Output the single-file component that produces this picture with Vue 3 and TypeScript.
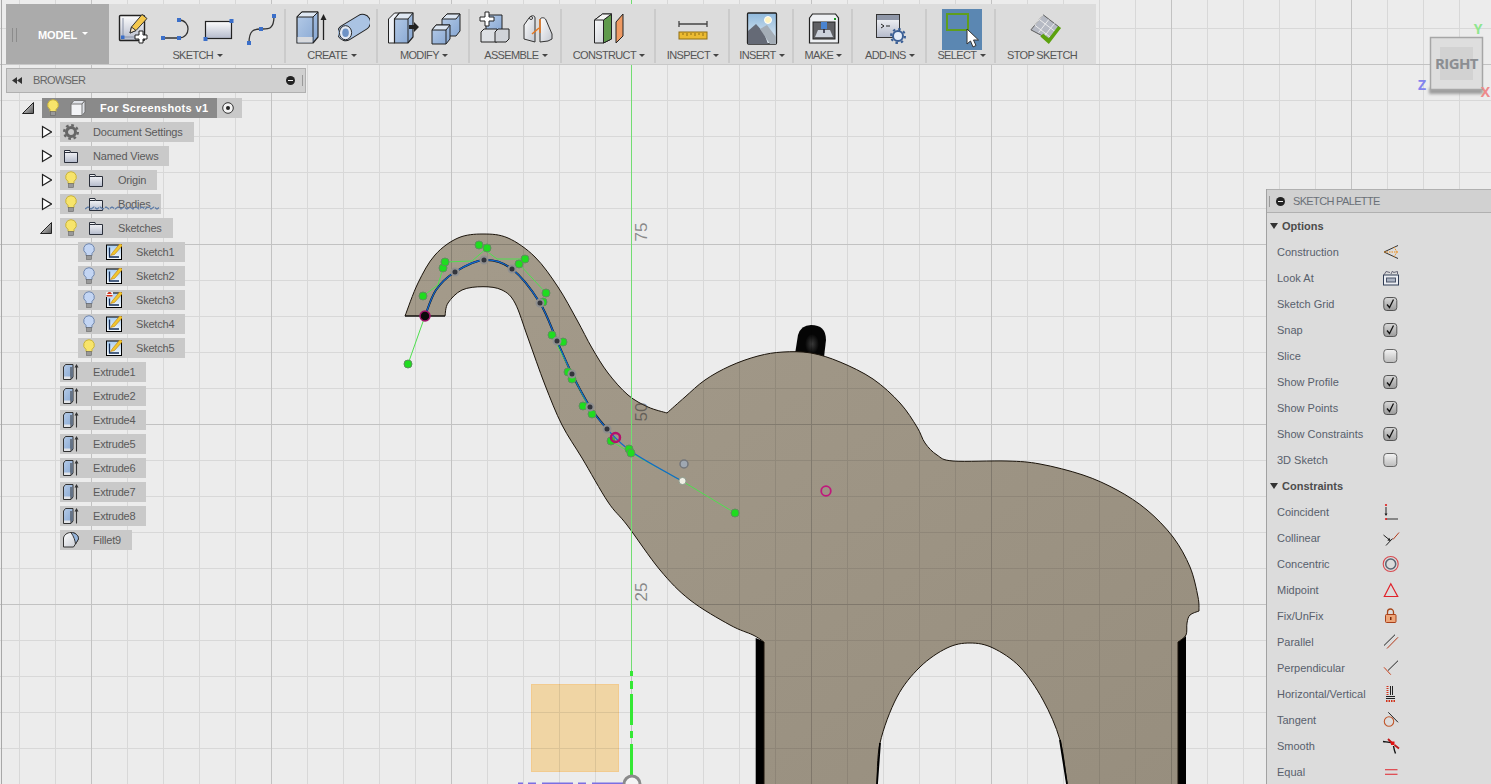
<script setup lang="ts">
type Pt = [number, number]

interface ToolGroup {
  label: string
  icons: string[]
  arrow: boolean
}

interface TreeRow {
  label: string
  depth: number
  expander?: 'closed' | 'open'
  bulb?: 'on' | 'off'
  icon: string
  broken?: boolean
}

const groups: ToolGroup[] = [
  { label: 'SKETCH', icons: ['i-newsketch', 'i-arc', 'i-rect', 'i-spline'], arrow: true },
  { label: 'CREATE', icons: ['i-extrude', 'i-pipe'], arrow: true },
  { label: 'MODIFY', icons: ['i-presspull', 'i-combine'], arrow: true },
  { label: 'ASSEMBLE', icons: ['i-newcomp', 'i-joint'], arrow: true },
  { label: 'CONSTRUCT', icons: ['i-construct'], arrow: true },
  { label: 'INSPECT', icons: ['i-inspect'], arrow: true },
  { label: 'INSERT', icons: ['i-picture'], arrow: true },
  { label: 'MAKE', icons: ['i-make'], arrow: true },
  { label: 'ADD-INS', icons: ['i-addin'], arrow: true },
  { label: 'SELECT', icons: ['i-select'], arrow: true },
  { label: 'STOP SKETCH', icons: ['i-stop'], arrow: false },
]

const tree: TreeRow[] = [
  { label: 'Document Settings', depth: 1, expander: 'closed', icon: 't-gear' },
  { label: 'Named Views', depth: 1, expander: 'closed', icon: 't-folder' },
  { label: 'Origin', depth: 1, expander: 'closed', bulb: 'on', icon: 't-folder' },
  { label: 'Bodies', depth: 1, expander: 'closed', bulb: 'on', icon: 't-folder', broken: true },
  { label: 'Sketches', depth: 1, expander: 'open', bulb: 'on', icon: 't-folder' },
  { label: 'Sketch1', depth: 2, bulb: 'off', icon: 't-sketch' },
  { label: 'Sketch2', depth: 2, bulb: 'off', icon: 't-sketch' },
  { label: 'Sketch3', depth: 2, bulb: 'off', icon: 't-sketchwarn' },
  { label: 'Sketch4', depth: 2, bulb: 'off', icon: 't-sketch' },
  { label: 'Sketch5', depth: 2, bulb: 'on', icon: 't-sketch' },
  { label: 'Extrude1', depth: 1, icon: 't-extrude' },
  { label: 'Extrude2', depth: 1, icon: 't-extrude' },
  { label: 'Extrude4', depth: 1, icon: 't-extrude' },
  { label: 'Extrude5', depth: 1, icon: 't-extrude' },
  { label: 'Extrude6', depth: 1, icon: 't-extrude' },
  { label: 'Extrude7', depth: 1, icon: 't-extrude' },
  { label: 'Extrude8', depth: 1, icon: 't-extrude' },
  { label: 'Fillet9', depth: 1, icon: 't-fillet' },
]

const options = [
  { label: 'Construction', icon: 'p-construction' },
  { label: 'Look At', icon: 'p-lookat' },
  { label: 'Sketch Grid', icon: 'p-checked' },
  { label: 'Snap', icon: 'p-checked' },
  { label: 'Slice', icon: 'p-unchecked' },
  { label: 'Show Profile', icon: 'p-checked' },
  { label: 'Show Points', icon: 'p-checked' },
  { label: 'Show Constraints', icon: 'p-checked' },
  { label: '3D Sketch', icon: 'p-unchecked' },
]

const constraints = [
  { label: 'Coincident', icon: 'p-coincident' },
  { label: 'Collinear', icon: 'p-collinear' },
  { label: 'Concentric', icon: 'p-concentric' },
  { label: 'Midpoint', icon: 'p-midpoint' },
  { label: 'Fix/UnFix', icon: 'p-lock' },
  { label: 'Parallel', icon: 'p-parallel' },
  { label: 'Perpendicular', icon: 'p-perpendicular' },
  { label: 'Horizontal/Vertical', icon: 'p-horizontal' },
  { label: 'Tangent', icon: 'p-tangent' },
  { label: 'Smooth', icon: 'p-smooth' },
  { label: 'Equal', icon: 'p-equal' },
]

// Catmull-Rom through the points, written as cubic segments
const smooth = (pts: Pt[]): string => {
  let d = ''
  for (let i = 0; i < pts.length - 1; i++) {
    const p0 = pts[Math.max(i - 1, 0)]
    const p1 = pts[i]
    const p2 = pts[i + 1]
    const p3 = pts[Math.min(i + 2, pts.length - 1)]
    const c1x = p1[0] + (p2[0] - p0[0]) / 6
    const c1y = p1[1] + (p2[1] - p0[1]) / 6
    const c2x = p2[0] - (p3[0] - p1[0]) / 6
    const c2y = p2[1] - (p3[1] - p1[1]) / 6
    d += ` C${c1x.toFixed(1)} ${c1y.toFixed(1)} ${c2x.toFixed(1)} ${c2y.toFixed(1)} ${p2[0]} ${p2[1]}`
  }
  return d
}

const trunkTop: Pt[] = [
  [405, 316], [418, 283], [435, 255], [458, 238], [483, 234], [508, 238], [535, 257], [558, 287],
  [577, 320], [592, 348], [608, 373], [628, 395], [648, 407], [667, 413],
]
const head: Pt[] = [
  [667, 413], [685, 397], [705, 380], [730, 366], [758, 356], [783, 352], [811, 353], [840, 362],
  [873, 379], [900, 403], [917, 427], [925, 443], [937, 455], [953, 461], [1007, 461], [1040, 464],
  [1083, 475], [1117, 490], [1147, 510], [1173, 537], [1190, 567], [1198, 597], [1199, 611],
]
const notch: Pt[] = [[1199, 611], [1190, 615], [1187, 623], [1186, 635], [1178, 642]]
const arch: Pt[] = [
  [1067, 784], [1060, 740], [1043, 700], [1020, 667], [993, 648], [970, 643], [947, 648], [920, 667],
  [897, 697], [880, 743], [877, 784],
]
const underTrunk: Pt[] = [
  [764, 642], [753, 635], [730, 625], [690, 600], [660, 570], [627, 525], [608, 502], [582, 458],
  [562, 425], [545, 385], [528, 338], [515, 303], [502, 290], [483, 286.7], [462, 290], [448, 303], [445, 316],
]

const bodyPath =
  'M405 316' + smooth(trunkTop) + smooth(head) + smooth(notch) +
  ' L1178 790 L1067 790 L1067 784' + smooth(arch) +
  ' L877 790 L764 790 L764 642' + smooth(underTrunk) + ' Z'

// the arch wall shows as a thicker dark edge on its lowest stretch
const archEdges = 'M1067 784' + smooth(arch.slice(0, 2)) + ' M880 743' + smooth(arch.slice(9))

const splineSolid: Pt[] = [
  [425, 316], [436, 290], [455, 272], [484, 260], [512, 269], [540, 303], [557, 341], [572, 374],
  [590, 407], [607, 429], [632, 452], [682, 481],
]
const splinePath = 'M425 316' + smooth(splineSolid)
// the black profile only runs under the spline up to the last knot
const profilePath = 'M425 316' + smooth(splineSolid.slice(0, 10))

const knots: Pt[] = [[455, 272], [484, 260], [512, 269], [540, 303], [557, 341], [572, 374], [590, 407], [607, 429]]

const handles: Pt[] = [
  [408, 364], [423, 296], [443, 268], [445, 262], [479, 245], [487, 248], [519, 264], [525, 259],
  [546, 293], [543, 302], [552, 335], [563, 342], [568, 372], [572, 379], [583, 406], [592, 414],
  [611, 441], [629, 449], [631, 453], [735, 513],
]

const handleLines = [
  '408,364 425,316',
  '423,296 438,285 443,268',
  '445,262 472,261 487,248',
  '479,245 497,259 525,259',
  '519,264 546,293',
  '552,335 572,374 592,414',
  '611,441 631,453 682,481 735,513',
]

const axisDashes = [[671, 676], [681, 689], [694, 725], [731, 738], [744, 777]]
const xDashes = [[518, 523], [528, 536], [542, 573], [578, 586], [592, 623]]
const scaleLabels = [
  { text: '75', y: 232 },
  { text: '50', y: 412 },
  { text: '25', y: 592 },
]
</script>

<template>
  <div class="app">
    <!-- icon sprite, not display:none or the gradients go missing -->
    <svg class="sprite" aria-hidden="true">
      <defs>
        <linearGradient id="g-paper" x1="0" y1="0" x2="0" y2="1"><stop offset="0" stop-color="#fdfdfd" /><stop offset="1" stop-color="#b4bacb" /></linearGradient>
        <linearGradient id="g-blue" x1="0" y1="0" x2="1" y2="1"><stop offset="0" stop-color="#b6cce8" /><stop offset="1" stop-color="#86a6d2" /></linearGradient>
        <linearGradient id="g-light" x1="0" y1="0" x2="1" y2="1"><stop offset="0" stop-color="#fff" /><stop offset="1" stop-color="#c4c8d0" /></linearGradient>
        <linearGradient id="g-sky" x1="0" y1="0" x2="0" y2="1"><stop offset="0" stop-color="#8fb9dc" /><stop offset="1" stop-color="#e4edf4" /></linearGradient>
        <linearGradient id="g-check" x1="0" y1="0" x2="0" y2="1"><stop offset="0" stop-color="#d9d9d9" /><stop offset="1" stop-color="#9b9b9b" /></linearGradient>
        <linearGradient id="g-uncheck" x1="0" y1="0" x2="0" y2="1"><stop offset="0" stop-color="#f4f4f4" /><stop offset="1" stop-color="#bcbcbc" /></linearGradient>
        <linearGradient id="g-tri" x1="0" y1="0" x2="1" y2="1"><stop offset="0" stop-color="#f2f2f2" /><stop offset="1" stop-color="#555" /></linearGradient>
        <linearGradient id="g-sketch" x1="0" y1="0" x2="0" y2="1"><stop offset="0" stop-color="#a9cdf0" /><stop offset="1" stop-color="#f7fbff" /></linearGradient>
      </defs>

      <symbol id="i-newsketch" viewBox="0 0 32 32">
        <rect x="2.500" y="3.500" width="25" height="25" rx="1" fill="url(#g-paper)" stroke="#222" stroke-width="1.400" />
        <path d="M6 6V25H24" fill="none" stroke="#8a93a8" />
        <rect x="4" y="23.500" width="3.500" height="3.500" fill="#3b6fc9" />
        <path d="M13 21l1.500-6L25 2.500l5 4L19 18.500z" fill="#f4c84e" stroke="#333" />
        <path d="M13 21l1.500-6 4.500 3.500z" fill="#f6e3c0" stroke="#333" />
        <path d="M22 19h4v4h4v4h-4v4h-4v-4h-4v-4h4z" fill="#fff" stroke="#222" />
      </symbol>
      <symbol id="i-arc" viewBox="0 0 32 32">
        <path d="M3 26H19C31 26 31 8 19 8" fill="none" stroke="#333" stroke-width="1.300" />
        <rect x="1" y="24" width="4" height="4" fill="#3b6fc9" /><rect x="17" y="24" width="4" height="4" fill="#3b6fc9" /><rect x="17" y="6" width="4" height="4" fill="#3b6fc9" />
      </symbol>
      <symbol id="i-rect" viewBox="0 0 32 32">
        <rect x="2.500" y="9.500" width="26" height="17" fill="url(#g-paper)" stroke="#222" stroke-width="1.200" />
        <rect x="26.500" y="7" width="4" height="4" fill="#3b6fc9" /><rect x="0.500" y="25" width="4" height="4" fill="#3b6fc9" />
      </symbol>
      <symbol id="i-spline" viewBox="0 0 32 32">
        <path d="M3 31C3 18 8 17 15 17S28 18 28 4" fill="none" stroke="#333" stroke-width="1.300" />
        <rect x="1" y="29" width="4" height="4" fill="#3b6fc9" /><rect x="13" y="15" width="4" height="4" fill="#3b6fc9" /><rect x="26" y="2" width="4" height="4" fill="#3b6fc9" />
      </symbol>
      <symbol id="i-extrude" viewBox="0 0 32 34">
        <path d="M2 6l5-5h16v25l-5 6H2z" fill="url(#g-blue)" stroke="#222" stroke-width="1.200" stroke-linejoin="round" />
        <path d="M2 6l5-5h16l-5 5z" fill="#dfe8f3" stroke="#222" />
        <path d="M18 6V32" stroke="#222" fill="none" />
        <path d="M2.500 26h15v5.500h-15z" fill="#d8dade" />
        <path d="M28.500 29V6" stroke="#222" stroke-width="1.300" /><path d="M28.500 3l-3 6h6z" fill="#222" />
      </symbol>
      <symbol id="i-pipe" viewBox="0 0 34 32">
        <path d="M8 21L26 10" stroke="#222" stroke-width="18" stroke-linecap="round" />
        <path d="M8 21L26 10" stroke="#aac3e3" stroke-width="16" stroke-linecap="round" />
        <ellipse cx="8" cy="21" rx="6.500" ry="7.500" fill="#e2e9f3" stroke="#222" />
        <ellipse cx="8" cy="21" rx="3.500" ry="4.500" fill="#6e93c6" />
      </symbol>
      <symbol id="i-presspull" viewBox="0 0 32 34">
        <path d="M1.500 8l6-6h5l-5 6v24h-6z" fill="#eef1f6" stroke="#222" />
        <path d="M7.500 8l5-6H26v24l-5 6H7.500z" fill="url(#g-blue)" stroke="#222" stroke-width="1.200" />
        <path d="M7.500 8l5-6H26l-5 6z" fill="#dfe8f3" stroke="#222" />
        <path d="M21 8v24" stroke="#222" />
        <path d="M22 14h5v-3l5 5-5 5v-3h-5z" fill="#222" />
      </symbol>
      <symbol id="i-combine" viewBox="0 0 32 34">
        <path d="M12 8l5-5h13v17l-4 5H12z" fill="url(#g-blue)" stroke="#222" />
        <path d="M12 8l5-5h13l-4 5z" fill="#dce6f2" stroke="#222" />
        <path d="M2 19l4-5h14v14l-4 5H2z" fill="url(#g-blue)" stroke="#222" />
        <path d="M2 19l4-5h14l-4 5z" fill="#dce6f2" stroke="#222" />
        <path d="M16 19v14" stroke="#222" />
      </symbol>
      <symbol id="i-newcomp" viewBox="0 0 32 34">
        <path d="M7 7l3-3h13v14l-3 3H7z" fill="url(#g-blue)" stroke="#222" />
        <path d="M2 21l3-3h13v13H2z" fill="#dde0e4" stroke="#222" />
        <path d="M16 21l3-3h11v10l-3 3H16z" fill="#d0d3d8" stroke="#222" />
        <path d="M6 1h4v5h5v4h-5v5H6v-5H1V6h5z" fill="#fff" stroke="#222" />
      </symbol>
      <symbol id="i-joint" viewBox="0 0 32 32">
        <path d="M2 27V13L7 6c2-3 6-3 6 0v24z" fill="url(#g-light)" stroke="#333" />
        <path d="M18 30V8c0-3 5-3 6 0l6 14v5l-4 2-8 1z" fill="url(#g-light)" stroke="#333" />
        <circle cx="9" cy="6" r="1.500" fill="#fff" stroke="#333" />
        <path d="M10 22l7-6" stroke="#e8771e" stroke-width="1.500" /><path d="M18 7v14" stroke="#e8771e" stroke-width="1.500" />
      </symbol>
      <symbol id="i-construct" viewBox="0 0 32 34">
        <path d="M1.500 9l8-6h9v25l-8 4h-9z" fill="url(#g-light)" stroke="#222" />
        <path d="M10.500 9l8-6v25l-8 4z" fill="#5f9a4c" stroke="#222" />
        <path d="M1.500 9l8-6h9l-8 6z" fill="#f4f4f4" stroke="#222" />
        <path d="M23 11l7-8v22l-7 7z" fill="#ef9a63" stroke="#222" />
      </symbol>
      <symbol id="i-inspect" viewBox="0 0 32 32">
        <path d="M2 9v6M30 9v6M2 12h28" fill="none" stroke="#444" stroke-width="1.300" />
        <rect x="2" y="20" width="28" height="7" fill="#ecbb31" stroke="#8f6e14" />
        <path d="M6 21v2M10 21v3M14 21v2M18 21v3M22 21v2M26 21v3" stroke="#8f6e14" />
      </symbol>
      <symbol id="i-picture" viewBox="0 0 32 34">
        <rect x="1.500" y="2" width="29" height="31" rx="1" fill="url(#g-sky)" stroke="#222" stroke-width="1.300" />
        <path d="M2 33V20l8-7 8 9 4 11z" fill="#656a76" />
        <path d="M14 18l7-4 9 12v7h-6z" fill="#a4adb6" />
        <circle cx="22" cy="9" r="3.500" fill="#fff4c0" stroke="#fff" />
      </symbol>
      <symbol id="i-make" viewBox="0 0 32 34">
        <path d="M1.500 7l3-4h23l3 4v25h-29z" fill="#eef0f3" stroke="#222" stroke-width="1.200" />
        <rect x="5" y="11" width="22" height="17" fill="#5f6064" stroke="#222" />
        <path d="M7 26l3-7h12l3 7z" fill="#ccd2dc" />
        <rect x="13" y="11" width="6" height="7" fill="#4a84d0" /><path d="M16 18v4" stroke="#223" stroke-width="1.500" />
        <rect x="26" y="7" width="2" height="2" fill="#1a9a20" />
      </symbol>
      <symbol id="i-addin" viewBox="0 0 32 34">
        <rect x="2.500" y="3.500" width="23" height="23" fill="url(#g-paper)" stroke="#333" />
        <rect x="3" y="4" width="22" height="5" fill="#8f97a8" />
        <path d="M7 13l3 2-3 2M12 15h4" fill="none" stroke="#222" />
        <circle cx="24" cy="25" r="5" fill="#e4ecf8" stroke="#3b5f95" stroke-width="2" />
        <circle cx="24" cy="25" r="7" fill="none" stroke="#3b5f95" stroke-width="2" stroke-dasharray="2.500 3" />
      </symbol>
      <symbol id="i-select" viewBox="0 0 40 41">
        <rect width="40" height="41" fill="#5b87b2" />
        <rect x="5" y="5" width="21" height="16" fill="none" stroke="#5f9e1d" stroke-width="2" />
        <path d="M25 20v15l3.500-3 2.500 6 3-1.500-2.500-5.500h5z" fill="#fff" stroke="#333" />
      </symbol>
      <symbol id="i-stop" viewBox="0 0 34 32">
        <path d="M1 18L14 2l17 13-11 13z" fill="#b6bac4" stroke="#555" />
        <path d="M5 13l17 13M10 7l17 13M14 2l-4 5-5 6M20 7L9 21M26 11L15 25" fill="none" stroke="#eee" />
        <path d="M14 22l6 5 10-13 3 2-13 17-9-8z" fill="#5ca10e" />
      </symbol>

      <symbol id="t-gear" viewBox="0 0 16 16">
        <circle cx="8" cy="8" r="4.500" fill="none" stroke="#666" stroke-width="3" />
        <circle cx="8" cy="8" r="6.800" fill="none" stroke="#666" stroke-width="2.400" stroke-dasharray="2.700 2.640" />
      </symbol>
      <symbol id="t-folder" viewBox="0 0 16 16">
        <path d="M1.500 2.500H7l.5 2h7v10h-13z" fill="url(#g-paper)" stroke="#2a2f3a" />
        <path d="M1.500 4.500H7" stroke="#2a2f3a" />
      </symbol>
      <symbol id="t-sketch" viewBox="0 0 16 16">
        <rect x="0.500" y="1" width="15" height="14.500" fill="url(#g-sketch)" stroke="#000" />
        <path d="M3.500 3.500v9.500H13" fill="none" stroke="#16305a" stroke-width="1.300" />
        <path d="M4.500 11.500l2-3L14 -0.500l2.500 2-8 9z" fill="#f2c72c" stroke="#b87a10" stroke-width="0.600" />
      </symbol>
      <symbol id="t-sketchwarn" viewBox="0 0 16 16">
        <rect x="0.500" y="1" width="15" height="14.500" fill="url(#g-sketch)" stroke="#000" />
        <path d="M3.500 6.500v6.500H13" fill="none" stroke="#16305a" stroke-width="1.300" />
        <path d="M4.500 11.500l2-3L14 -0.500l2.500 2-8 9z" fill="#f2c72c" stroke="#b87a10" stroke-width="0.600" />
        <rect x="0" y="-1" width="7" height="6" fill="#eee" />
        <path d="M3.500 -1l2.500 3H1zM0.500 3h6v1.500h-6z" fill="#d0341c" />
      </symbol>
      <symbol id="t-extrude" viewBox="0 0 16 16">
        <path d="M.5 3l2-2.500H10V13l-2 2.500H.5z" fill="url(#g-blue)" stroke="#333" />
        <path d="M1 12.500h7v2.500H1z" fill="#e2e4e8" /><path d="M8 3v12" stroke="#333" />
        <path d="M13.500 15.500V2" stroke="#333" stroke-width="1.100" /><path d="M13.500 0l-2 3.500h4z" fill="#333" />
      </symbol>
      <symbol id="t-fillet" viewBox="0 0 16 16">
        <path d="M.5 6C1 3 4 .5 8 .5c4 0 7.500 2.500 7.500 6.500l-3 5-2 3H.5z" fill="url(#g-light)" stroke="#333" />
        <path d="M8 .5c4 0 7.500 2.500 7.500 6.500l-3 5C12 8 11 5 8 .5z" fill="#95b5dd" stroke="#333" />
      </symbol>
      <symbol id="b-on" viewBox="0 0 12 18">
        <path d="M6 .7a5.300 5.300 0 0 1 3 9.700v2.100H3v-2.100A5.300 5.300 0 0 1 6 .7z" fill="#f7e46b" stroke="#c8b23c" />
        <rect x="3.500" y="12.500" width="5" height="4" fill="#999" stroke="#666" stroke-width="0.600" />
      </symbol>
      <symbol id="b-off" viewBox="0 0 12 18">
        <path d="M6 .7a5.300 5.300 0 0 1 3 9.700v2.100H3v-2.100A5.300 5.300 0 0 1 6 .7z" fill="#c3d5f3" stroke="#6f86ad" />
        <rect x="3.500" y="12.500" width="5" height="4" fill="#999" stroke="#666" stroke-width="0.600" />
      </symbol>
      <symbol id="e-closed" viewBox="0 0 12 14">
        <path d="M2.500 1.500L11.500 7 2.500 12.500z" fill="#fff" stroke="#222" stroke-width="1.200" />
      </symbol>
      <symbol id="e-open" viewBox="0 0 12 14">
        <path d="M11.500 1.500V12.500H.5z" fill="url(#g-tri)" stroke="#222" />
      </symbol>

      <symbol id="p-checked" viewBox="0 0 20 20">
        <rect x="2.800" y="3.500" width="13" height="13" rx="3" fill="url(#g-check)" stroke="#555" />
        <path d="M6 10.500l2.500 3L12.500 5.500" fill="none" stroke="#111" stroke-width="1.300" />
      </symbol>
      <symbol id="p-unchecked" viewBox="0 0 20 20">
        <rect x="2.800" y="3.500" width="13" height="13" rx="3" fill="url(#g-uncheck)" stroke="#666" />
      </symbol>
      <symbol id="p-construction" viewBox="0 0 20 20">
        <path d="M17 3.500L3 10l14 6.500" fill="none" stroke="#333" />
        <path d="M3 10h15M13 5l3 5-3 5" fill="none" stroke="#ee8a10" stroke-dasharray="1.500 1" />
      </symbol>
      <symbol id="p-lookat" viewBox="0 0 20 20">
        <rect x="2.500" y="7" width="15" height="10" fill="#eceef3" stroke="#2f3c55" />
        <rect x="5.500" y="10" width="9" height="4" fill="#aab2c2" stroke="#4a5468" />
        <path d="M3 7l2-3.500 4 1M10 6l1.500-3 1 1.500 4-1V6" fill="none" stroke="#667" />
      </symbol>
      <symbol id="p-coincident" viewBox="0 0 20 20">
        <path d="M5 5v8" stroke="#222" /><path d="M3.500 11.500L5 14l1.500-2.500z" fill="#222" />
        <path d="M5 17h12" stroke="#333" />
        <circle cx="5" cy="3" r="1.100" fill="#e01c1c" /><circle cx="5" cy="17" r="1.100" fill="#e01c1c" />
      </symbol>
      <symbol id="p-collinear" viewBox="0 0 20 20">
        <path d="M5 17.500l6.500-7" stroke="#222" /><path d="M12 11.500L18 4.500" stroke="#b33a1a" />
        <path d="M2.500 7L8 11.500" stroke="#222" /><path d="M10 13l-3.600-.6 1.800-2.600z" fill="#222" />
      </symbol>
      <symbol id="p-concentric" viewBox="0 0 20 20">
        <circle cx="9.700" cy="10" r="7.500" fill="none" stroke="#d8484e" stroke-width="1.100" />
        <circle cx="9.700" cy="10" r="5" fill="none" stroke="#5b6472" stroke-width="1.500" />
      </symbol>
      <symbol id="p-midpoint" viewBox="0 0 20 20">
        <path d="M3.300 16.500L9.800 3.700l6.900 12.800z" fill="none" stroke="#e0222a" stroke-width="1.200" />
      </symbol>
      <symbol id="p-lock" viewBox="0 0 20 20">
        <path d="M6.500 9V6a3 3 0 0 1 6 0v3" fill="none" stroke="#a8481c" stroke-width="1.300" />
        <rect x="4.500" y="8.500" width="10.500" height="8" rx="1" fill="#eda67a" stroke="#a8401a" />
        <rect x="9" y="11" width="1.500" height="3" fill="#7a2c10" />
      </symbol>
      <symbol id="p-parallel" viewBox="0 0 20 20">
        <path d="M3 13.500L14 2.700" stroke="#222" /><path d="M6 16.500L17 5.300" stroke="#b33a1a" />
      </symbol>
      <symbol id="p-perpendicular" viewBox="0 0 20 20">
        <path d="M17 2.700L7 12.500" stroke="#222" /><path d="M3 9.300l6.800 7.400" stroke="#c8401a" />
      </symbol>
      <symbol id="p-horizontal" viewBox="0 0 20 20">
        <path d="M6.500 2v9" stroke="#d0341c" stroke-width="2" stroke-dasharray="1 1" />
        <path d="M9.500 2v9M11.500 2v9M5 12.500h9M5 14.500h9" stroke="#222" />
        <path d="M5 17h9" stroke="#d0341c" stroke-width="2" stroke-dasharray="1.500 1" />
      </symbol>
      <symbol id="p-tangent" viewBox="0 0 20 20">
        <circle cx="8" cy="11.500" r="4.700" fill="none" stroke="#c0562a" stroke-width="1.100" />
        <path d="M7.300 2.300L17 12.300" stroke="#222" />
      </symbol>
      <symbol id="p-smooth" viewBox="0 0 20 20">
        <path d="M2 5.500C6 6 9 6 11 7M12.500 10c.5 3 1 5 2 7.500" fill="none" stroke="#111" stroke-width="1.400" />
        <path d="M7 3l3.500 3.500M13.500 9L18 12.500" stroke="#c01818" stroke-width="1.800" />
        <rect x="10" y="5.500" width="3.500" height="3.500" fill="#e01010" />
      </symbol>
      <symbol id="p-equal" viewBox="0 0 20 20">
        <path d="M4 7.800H16.500M4 12.200H16.500" stroke="#e0222a" stroke-width="1.100" />
      </symbol>
    </svg>

    <svg class="canvas" viewBox="0 0 1491 784" aria-label="Sketch canvas">
      <defs>
        <pattern id="minor" patternUnits="userSpaceOnUse" x="19" y="28" width="36" height="36">
          <path d="M0 0H36V1H1V36H0Z" fill="rgba(0,0,0,.085)" />
        </pattern>
        <pattern id="major" patternUnits="userSpaceOnUse" x="91" y="64" width="180" height="180">
          <path d="M0 0H180V1H1V180H0Z" fill="rgba(0,0,0,.1)" />
        </pattern>
        <linearGradient id="body-fill" x1="0" y1="0" x2="1" y2="1">
          <stop offset="0" stop-color="#a49b8b" />
          <stop offset="1" stop-color="#978e7e" />
        </linearGradient>
        <radialGradient id="ear-dots">
          <stop offset="0" stop-color="#3a3a3a" />
          <stop offset="1" stop-color="#050505" />
        </radialGradient>
        <filter id="soft" x="-20%" y="-100%" width="140%" height="300%">
          <feGaussianBlur stdDeviation="1.500" />
        </filter>
      </defs>
      <rect width="1491" height="784" fill="#ececec" />
      <rect x="531.500" y="684.500" width="87" height="87" fill="#f0d5a4" stroke="#f2cb8f" />

      <path d="M795 354L798 335Q801 325 811 325Q826 325 826 340L824 357Z" fill="#050505" />
      <ellipse cx="812" cy="344" rx="7" ry="10" fill="url(#ear-dots)" />
      <path d="M755.700 638L765 642V784H755.700Z" fill="#000" />
      <path d="M1178 642L1186 636V784H1178Z" fill="#000" />
      <path :d="bodyPath" fill="url(#body-fill)" stroke="#1a130a" stroke-width="1" />
      <path :d="archEdges" fill="none" stroke="#000" stroke-width="1.800" />

      <rect width="1491" height="784" fill="url(#minor)" />
      <rect width="1491" height="784" fill="url(#major)" />
      <rect x="1" width="1" height="784" fill="#a8a8a8" />

      <rect x="631" y="0" width="1" height="672" fill="#72dd72" />
      <rect v-for="d in axisDashes" :key="d[0]" x="630" :y="d[0]" width="3" :height="d[1] - d[0]" fill="#35e835" />
      <rect v-for="d in xDashes" :key="d[0]" :x="d[0]" y="782.500" :width="d[1] - d[0]" height="2" fill="#7a6fe2" />
      <circle cx="632" cy="784" r="8" fill="#f4f4f4" stroke="#8a8a8a" stroke-width="3" />

      <text
        v-for="s in scaleLabels"
        :key="s.text"
        class="scale-label"
        :transform="`translate(647 ${s.y}) rotate(-90)`"
        text-anchor="middle"
      >{{ s.text }}</text>

      <path d="M405 316H445" fill="none" stroke="#111" />
      <path :d="profilePath" fill="none" stroke="#111" stroke-width="2" />
      <polyline v-for="l in handleLines" :key="l" :points="l" fill="none" stroke="#4ee04e" />
      <path :d="splinePath" fill="none" stroke="#1166cc" stroke-width="1.300" />
      <circle v-for="h in handles" :key="h.join()" :cx="h[0]" :cy="h[1]" r="4" fill="#1fdc1f" stroke="#5d8f5d" />
      <circle v-for="k in knots" :key="k.join()" :cx="k[0]" :cy="k[1]" r="3.500" fill="#33353c" stroke="#8f8f8f" stroke-width="2" />
      <circle cx="425" cy="316" r="5" fill="#0a0a0a" stroke="#a0146a" stroke-width="1.500" />
      <circle cx="615.500" cy="437.500" r="4.500" fill="none" stroke="#b4106c" stroke-width="2.500" />
      <circle cx="826" cy="491" r="4.800" fill="none" stroke="#c0187c" stroke-width="1.800" />
      <circle cx="684" cy="464" r="4" fill="#9fa8b2" stroke="#73767a" stroke-width="1.500" />
      <circle cx="682.500" cy="481" r="3.600" fill="#f0f0e6" stroke="#8c9a8c" />

      <!-- view cube -->
      <rect x="1429" y="88" width="54" height="6" fill="#9c9c9c" filter="url(#soft)" />
      <rect x="1430.500" y="37.500" width="52" height="52" fill="#dedede" stroke="#a6a6a6" stroke-width="1.500" />
      <rect x="1440" y="47" width="33" height="33" fill="#d2d2d2" />
      <text class="cube-face" x="1456.500" y="69" text-anchor="middle">RIGHT</text>
      <text class="cube-axis" x="1478" y="34" text-anchor="middle" fill="#8fe68f">Y</text>
      <text class="cube-axis" x="1422" y="90" text-anchor="middle" fill="#8484ee">Z</text>
      <text class="cube-axis" x="1485.500" y="97" text-anchor="middle" fill="#ee8a8a">X</text>
    </svg>

    <header class="toolbar">
      <button class="model">
        <span class="grip"></span>
        <span class="model-name">MODEL</span>
        <span class="caret caret-white"></span>
      </button>
      <div v-for="g in groups" :key="g.label" class="group">
        <div class="group-icons">
          <svg
            v-for="i in g.icons"
            :key="i"
            class="tool-icon"
            :class="{ 'tool-select': i === 'i-select' }"
          ><use :href="`#${i}`" /></svg>
        </div>
        <div class="group-label">
          {{ g.label }}
          <span v-if="g.arrow" class="caret"></span>
        </div>
      </div>
    </header>

    <section class="browser">
      <div class="browser-head">
        <svg class="rewind" viewBox="0 0 10 7"><path d="M5 0v7L0 3.500zM10 0v7L5 3.500z" fill="#333" /></svg>
        <span class="browser-title">BROWSER</span>
        <span class="minus"></span>
        <span class="head-grip"></span>
      </div>

      <div class="tree">
        <div class="tree-row depth-0">
          <svg class="expander"><use href="#e-open" /></svg>
          <div class="pill root-pill">
            <div class="root-dark">
              <svg class="bulb"><use href="#b-on" /></svg>
              <svg class="node-icon" viewBox="0 0 16 16">
                <path d="M1 4l3-3.500h11V12l-3 3.500H1z" fill="#f2f3f6" stroke="#777" />
                <path d="M12 4l3-3.500V12l-3 3.500zM1 4l3-3.500h11L12 4z" fill="#dfe2e8" stroke="#777" />
              </svg>
              <span class="root-name">For Screenshots v1</span>
            </div>
            <svg class="radio" viewBox="0 0 12 12">
              <circle cx="6" cy="6" r="5.300" fill="#f2f2f2" stroke="#333" />
              <circle cx="6" cy="6" r="2" fill="#222" />
            </svg>
          </div>
        </div>

        <div v-for="row in tree" :key="row.label" class="tree-row" :class="`depth-${row.depth}`">
          <svg v-if="row.expander" class="expander"><use :href="`#e-${row.expander}`" /></svg>
          <span v-else class="expander"></span>
          <div class="pill">
            <span v-if="row.bulb" class="bulb-slot">
              <svg class="bulb"><use :href="`#b-${row.bulb}`" /></svg>
            </span>
            <svg class="node-icon"><use :href="`#${row.icon}`" /></svg>
            <span class="node-name">{{ row.label }}</span>
            <svg v-if="row.broken" class="wavy" viewBox="0 0 76 4" preserveAspectRatio="none">
              <path d="M0 3L3 1 6 3 9 1 12 3 15 1 18 3 21 1 24 3 27 1 30 3 33 1 36 3 39 1 42 3 45 1 48 3 51 1 54 3 57 1 60 3 63 1 66 3 69 1 72 3 75 1" fill="none" stroke="#5f7ca6" stroke-width="1.300" stroke-dasharray="5 1" />
            </svg>
          </div>
        </div>
      </div>
    </section>

    <aside class="palette">
      <div class="palette-head">
        <span class="head-grip"></span>
        <span class="minus"></span>
        <span class="palette-title">SKETCH PALETTE</span>
      </div>
      <div class="section-title"><span class="section-arrow"></span>Options</div>
      <div v-for="o in options" :key="o.label" class="palette-row">
        <span class="palette-label">{{ o.label }}</span>
        <svg class="palette-icon"><use :href="`#${o.icon}`" /></svg>
      </div>
      <div class="section-title"><span class="section-arrow"></span>Constraints</div>
      <div v-for="c in constraints" :key="c.label" class="palette-row">
        <span class="palette-label">{{ c.label }}</span>
        <svg class="palette-icon"><use :href="`#${c.icon}`" /></svg>
      </div>
    </aside>
  </div>
</template>

<style>
html,
body {
  margin: 0;
  overflow: hidden;
}
</style>

<style scoped>
.app {
  position: relative;
  width: 1491px;
  height: 784px;
  overflow: hidden;
  background: #ececec;
  font-family: "Liberation Sans", Arial, sans-serif;
  font-size: 11px;
  color: #5a5a5a;
}

.sprite {
  position: absolute;
  width: 0;
  height: 0;
}

.canvas {
  position: absolute;
  inset: 0;
  width: 1491px;
  height: 784px;
  display: block;
}

.scale-label {
  font-family: "Liberation Sans", Arial, sans-serif;
  font-size: 17px;
  fill: rgba(50, 50, 50, 0.55);
}

.cube-face {
  font-family: "Open Sans", sans-serif;
  font-size: 15px;
  font-weight: 700;
  letter-spacing: -0.6px;
  fill: #8b8e92;
}

.cube-axis {
  font-family: "Open Sans", sans-serif;
  font-size: 14px;
  font-weight: 700;
}

/* toolbar */
.toolbar {
  position: absolute;
  left: 6px;
  top: 4px;
  width: 1090px;
  height: 61px;
  display: grid;
  grid-template-columns: 103px 177px 92px 92px 92px 94px 74px 64px 59px 74px 69px 100px;
  background: #dcdcdc;
  border-bottom: 1px solid #c8c8c8;
  box-sizing: border-box;
}

.model {
  display: flex;
  align-items: center;
  padding: 2px 0 0;
  border: none;
  background: #ababab;
  color: #fff;
  font: bold 11px "Liberation Sans", Arial, sans-serif;
}

.grip {
  width: 3px;
  height: 14px;
  margin-left: 6px;
  border-left: 1px solid #8c8c8c;
  border-right: 1px solid #8c8c8c;
}

.model-name {
  margin-left: 21px;
  letter-spacing: -0.15px;
}

.caret {
  display: inline-block;
  width: 0;
  height: 0;
  margin-left: 1px;
  border-left: 3px solid transparent;
  border-right: 3px solid transparent;
  border-top: 3px solid #444;
  vertical-align: 2px;
}

.caret-white {
  margin-left: 5px;
  margin-top: -3px;
  border-top-color: #fff;
}

.group {
  display: flex;
  flex-direction: column;
  height: 54px;
  margin-top: 5px;
  padding-left: 2px;
  border-right: 2px solid #cbcbcb;
  box-sizing: border-box;
}

.group:last-child {
  border-right: none;
  padding-left: 0;
}

.group:last-child .group-label {
  margin-right: 8px;
}

.group-icons {
  display: flex;
  justify-content: center;
  align-items: center;
  gap: 11px;
  height: 38px;
}

.tool-icon {
  width: 32px;
  height: 34px;
  flex: none;
  overflow: visible;
}

.tool-select {
  width: 40px;
  height: 41px;
  align-self: flex-start;
}

.group-label {
  height: 16px;
  line-height: 16px;
  text-align: center;
  white-space: nowrap;
  letter-spacing: -0.65px;
  color: #555;
}

/* browser */
.browser {
  position: absolute;
  left: 6px;
  top: 68px;
  width: 300px;
}

.browser-head {
  display: flex;
  align-items: center;
  height: 25px;
  box-sizing: border-box;
  background: #d0d0d0;
  border: 1px solid #b0b0b0;
}

.rewind {
  width: 10px;
  height: 7px;
  margin-left: 5px;
}

.browser-title {
  margin: 0 0 1px 11px;
  flex: 1;
  letter-spacing: -0.65px;
  color: #666;
}

.minus {
  position: relative;
  display: block;
  width: 9px;
  height: 9px;
  border-radius: 50%;
  background: #222;
}

.minus::after {
  content: "";
  position: absolute;
  left: 2px;
  right: 2px;
  top: 4px;
  height: 1px;
  background: #eee;
}

.head-grip {
  width: 1px;
  height: 11px;
  margin: 0 2px 0 7px;
  background: #999;
}

.tree {
  display: flex;
  flex-direction: column;
  gap: 4px;
  padding-top: 5px;
}

.tree-row {
  display: flex;
  align-items: center;
  height: 20px;
}

.depth-0 {
  padding-left: 16px;
}

.depth-1 {
  padding-left: 34px;
}

.depth-2 {
  padding-left: 52px;
}

.expander {
  width: 12px;
  height: 14px;
  margin-right: 8px;
  flex: none;
}

.pill {
  position: relative;
  display: flex;
  align-items: center;
  height: 20px;
  padding: 0 11px 0 3px;
  background: #c9c9c9;
  white-space: nowrap;
}

.node-name {
  letter-spacing: -0.2px;
}

.root-pill {
  width: 200px;
  padding: 0;
  box-sizing: border-box;
}

.root-dark {
  display: flex;
  align-items: center;
  width: 175px;
  height: 20px;
  padding-left: 3px;
  box-sizing: border-box;
  background: #8a8a8a;
}

.root-dark .bulb {
  margin-right: 11px;
  margin-left: 2px;
}

.root-name {
  color: #fff;
  font-weight: 700;
  letter-spacing: 0.35px;
}

.radio {
  width: 12px;
  height: 12px;
  margin-left: 5px;
}

.bulb-slot {
  display: flex;
  width: 25px;
  padding-left: 2px;
  box-sizing: border-box;
}

.bulb {
  width: 12px;
  height: 18px;
  flex: none;
}

.node-icon {
  width: 16px;
  height: 16px;
  margin-right: 14px;
  flex: none;
  overflow: visible;
}

.wavy {
  position: absolute;
  left: 25px;
  top: 12px;
  width: 76px;
  height: 4px;
}

/* palette */
.palette {
  position: absolute;
  left: 1266px;
  top: 189px;
  right: 0;
  bottom: 0;
  background: #dcdcdc;
  border-left: 1px solid #a2a2a2;
  overflow: hidden;
}

.palette-head {
  display: flex;
  align-items: center;
  height: 24px;
  box-sizing: border-box;
  background: #d1d1d1;
  border-top: 1px solid #b0b0b0;
  border-bottom: 1px solid #b0b0b0;
}

.palette-head .head-grip {
  margin: 0 6px 0 2px;
}

.palette-title {
  margin-left: 8px;
  letter-spacing: -0.65px;
  color: #6a7078;
}

.section-title {
  display: flex;
  align-items: center;
  height: 26px;
  padding-left: 3px;
  font-weight: 700;
  color: #4c4c4c;
}

.section-arrow {
  width: 0;
  height: 0;
  margin-right: 4px;
  border-left: 4px solid transparent;
  border-right: 4px solid transparent;
  border-top: 6px solid #333;
}

.palette-row {
  display: flex;
  align-items: center;
  height: 26px;
  padding-left: 10px;
}

.palette-label {
  width: 104px;
  flex: none;
  color: #58606c;
}

.palette-icon {
  width: 20px;
  height: 20px;
  flex: none;
}
</style>
